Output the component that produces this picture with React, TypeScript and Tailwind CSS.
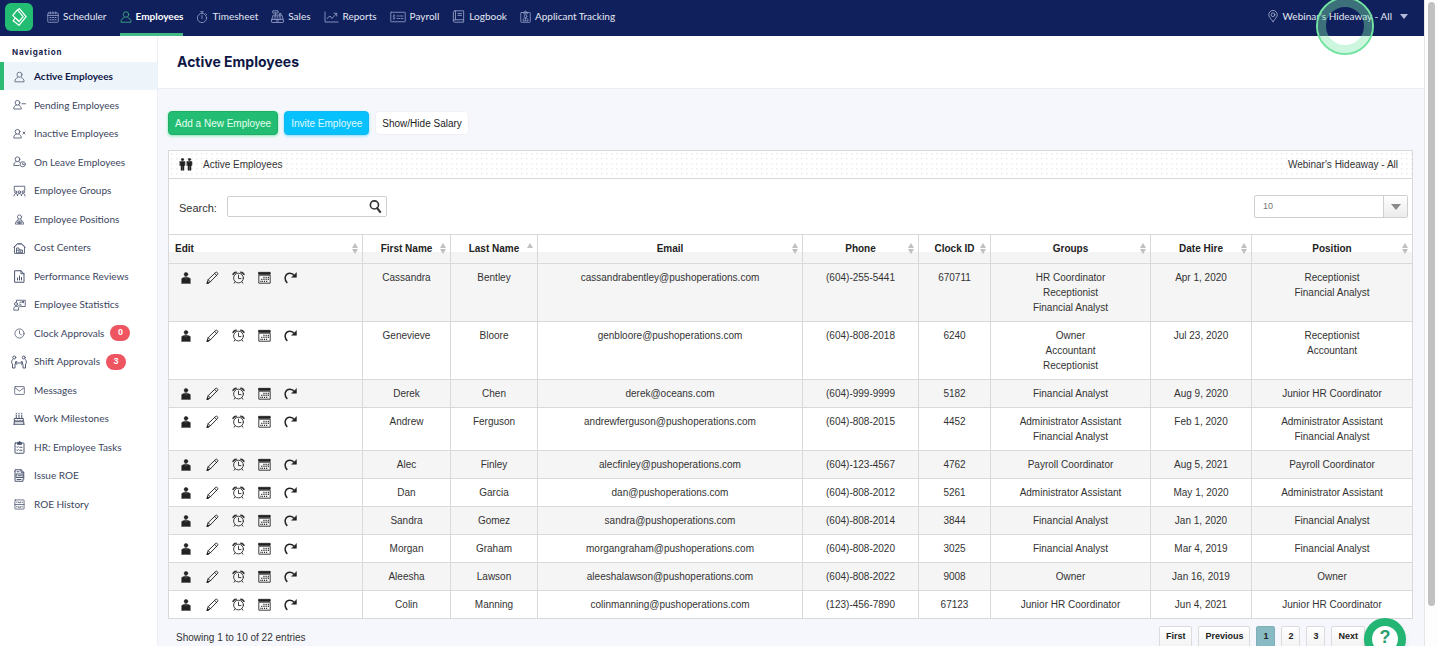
import type { ReactNode } from "react";
import clsx from "clsx";

type IconProps = { className?: string };

function Icon({
  className = "size-3",
  box = "0 0 24 24",
  width = 1.7,
  children,
}: {
  className?: string;
  box?: string;
  width?: number;
  children: ReactNode;
}) {
  return (
    <svg
      className={clsx("shrink-0", className)}
      viewBox={box}
      fill="none"
      stroke="currentColor"
      strokeWidth={width}
      strokeLinecap="round"
      strokeLinejoin="round"
      aria-hidden="true"
    >
      {children}
    </svg>
  );
}

/* ---------- top bar icons ---------- */

const CalendarIcon = () => (
  <Icon>
    <rect x="1.5" y="4" width="21" height="18.5" rx="1.5" />
    <path d="M1.5 9h21M6.5 1.5V6M12 1.5V6M17.5 1.5V6" />
    <path d="M6 13h2M11 13h2M16 13h2M6 17.5h2M11 17.5h2M16 17.5h2" strokeWidth="2.4" />
  </Icon>
);

const PersonIcon = ({ className }: IconProps) => (
  <Icon className={className}>
    <circle cx="12" cy="7" r="5.5" />
    <path d="M8 13.5C4 14.5 2 17 2 22.5h20c0-5.5-2-8-6-9" />
  </Icon>
);

const StopwatchIcon = () => (
  <Icon>
    <circle cx="12" cy="14" r="9.2" />
    <path d="M9.5 1.5h5M12 1.5v3M12 9v6M19.5 5.5l2 2" />
  </Icon>
);

const RegisterIcon = () => (
  <Icon className="size-[13px]">
    <rect x="1" y="17.5" width="22" height="5.5" rx="1" />
    <path d="M1.5 17.5 4 9.5h16l2.5 8" />
    <rect x="4" y="1.5" width="9" height="4" />
    <path d="M8.5 5.5v4M15.5 9.500v-3h3v3" />
    <path d="M6.5 12.500h2M11 12.500h2M15.5 12.500h2M6 15h2M11 15h2M16 15h2M10 20.200h4" />
  </Icon>
);

const ChartIcon = () => (
  <Icon className="h-3 w-[15px]" box="0 0 30 24" width={1.8}>
    <path d="M2 2v20h26" />
    <path d="m6 15 6-5 4 5 9-10M20 4.5h5.500V10" />
  </Icon>
);

const ChequeIcon = () => (
  <Icon className="h-3 w-4" box="0 0 32 24" width={1.7}>
    <rect x="1.5" y="2.5" width="29" height="19" rx="1" />
    <path d="M9.5 9.5c-3-1-4 2-1.5 2.5s2 3.5-1.5 2.5M8 7.5V9M8 15v1.5" />
    <path d="M14 10h4M20 10h6M14 15h2M18 15h2M23 15h3" />
  </Icon>
);

const BookIcon = () => (
  <Icon className="size-[13px]">
    <path d="M5 1.5h16.500v16.5H5c-3 0-3 4.5 0 4.5h16.500V18" />
    <path d="M2.500 20V4c0-1.500 1-2.500 2.500-2.500M6.500 1.500V18M11 6.500h6.500M11 10h6.500" />
  </Icon>
);

const ApplicantIcon = () => (
  <Icon className="h-[13px] w-[11px]" box="0 0 22 26">
    <rect x="1.500" y="5" width="19" height="19.500" rx="1" />
    <path d="M7.500 7V4h2c.5-3 2.500-3 3 0h2v3z" />
    <circle cx="11" cy="12.500" r="2.700" />
    <path d="M6 21c0-4 2-5 5-5s5 1 5 5zM11 16.500V20" />
  </Icon>
);

const PinIcon = () => (
  <Icon className="h-3.5 w-3" width={1.5}>
    <path d="M12 23C6 16 3.500 13 3.500 9.500a8.500 8.500 0 0 1 17 0C20.500 13 18 16 12 23z" />
    <circle cx="12" cy="9.500" r="3.700" />
  </Icon>
);

/* ---------- sidebar icons ---------- */

const personPath = (
  <>
    <circle cx="9" cy="7.500" r="4.700" />
    <path d="M6.500 12.500c-3.500 1-5 3-5 7.500h15c0-4.500-1.500-6.500-5-7.500" />
  </>
);

const PersonMinusIcon = () => (
  <Icon className="h-3 w-[13px]" box="0 0 26 24">
    {personPath}
    <path d="M18 9.500h7" />
  </Icon>
);

const PersonXIcon = () => (
  <Icon className="h-3 w-[13px]" box="0 0 26 24">
    {personPath}
    <path d="m20 8 4 4M24 8l-4 4" />
  </Icon>
);

const PersonClockIcon = () => (
  <Icon className="h-3 w-[13px]" box="0 0 26 24">
    <circle cx="9" cy="6.500" r="4.700" />
    <path d="M6.500 11.500c-3.500 1-5 3-5 7.500H12M11.500 11.500l2 1" />
    <circle cx="19.500" cy="16.500" r="5.200" />
    <path d="M19.500 14v3h2" />
  </Icon>
);

const GroupIcon = () => (
  <Icon className="h-3 w-[13px]" box="0 0 26 24">
    <path d="M2.500 11V2.500h21V11" />
    <circle cx="5.500" cy="14" r="2.300" />
    <circle cx="13" cy="14" r="2.300" />
    <circle cx="20.500" cy="14" r="2.300" />
    <path d="M2 22c0-7 7-7 7 0 0-7 8-7 8 0 0-7 7-7 7 0" />
  </Icon>
);

const PositionIcon = () => (
  <Icon className="size-[11px]">
    <circle cx="12" cy="6.500" r="4.500" />
    <path d="M9 11v3c-4 1-6 3-6 8h18c0-5-2-7-6-8v-3M8 14.500l4 7 4-7M12 15v6M6 18h3v3M18 18h-3v3" />
  </Icon>
);

const WarehouseIcon = () => (
  <Icon className="h-3 w-[13px]" box="0 0 26 24">
    <path d="M3 22V9.500L9 4h8l6 5.500V22zM1.500 10.500 9 3.500h8l7.500 7" />
    <path d="M7 21v-9h5v4h7v5zM7 16.500h5v4.500M15.500 16v5" />
  </Icon>
);

const ReviewIcon = () => (
  <Icon className="h-[13px] w-[11px]" box="0 0 22 26" width={2}>
    <path d="M2 1.500h12l6 6v17H2zM14 1.500v6h6" />
    <path d="M7 20v-4M11 20v-8M15 20v-5" />
  </Icon>
);

const StatsIcon = () => (
  <Icon className="h-3 w-[13px]" box="0 0 26 24">
    <path d="M7 6V2.500h17.500V15H16" />
    <circle cx="6" cy="10" r="3" />
    <path d="M1.500 21.500C1.500 16 3 14.500 6 14.500h4l5-4 1.500 2-5.500 5V21.500zM13 8l3-2.500 2 2L21 5M18.500 5H21v2.500" />
  </Icon>
);

const ClockIcon = () => (
  <Icon className="size-[11px]">
    <circle cx="12" cy="12" r="10" />
    <path d="M12 6v6.500l4 2.500" />
  </Icon>
);

const SwapPeopleIcon = () => (
  <Icon className="h-3.5 w-4" box="0 0 32 28" width={1.9}>
    <circle cx="6.500" cy="5" r="3" />
    <circle cx="25.500" cy="5" r="3" />
    <path d="M3 9C0 12 1 17 3 18v8h5v-8c2-1 2-3 2-5M29 9c3 3 2 8 0 9v8h-5v-8c-2-1-2-3-2-5" />
    <path d="M9 16h14M11.500 13l-3 3 3 3M20.500 13l3 3-3 3" />
  </Icon>
);

const MailIcon = () => (
  <Icon className="size-[11px]">
    <rect x="1.500" y="3.500" width="21" height="17" rx="1.500" />
    <path d="m3 6.500 9 7 9-7" />
  </Icon>
);

const CakeIcon = () => (
  <Icon className="h-[13px] w-3" box="0 0 24 26" width={2}>
    <path d="M3.500 13h17v6.500h-17zM1.500 24.500h21M2.500 19.500v5M21.500 19.500v5M3.500 16.500c2 2 4 2 5.500 0 2 2 4 2 5.500 0 2 2 4 2 6 0" />
    <path d="M6.500 12.500V6M12 12.500V6M17.500 12.500V6M6.500 2.500v1M12 2.500v1M17.500 2.500v1" />
  </Icon>
);

const TasksIcon = () => (
  <Icon className="h-[13px] w-[11px]" box="0 0 22 26" width={2}>
    <rect x="2" y="4" width="18" height="20.500" rx="1" />
    <path d="M7 6V3h2c0-2.500 4-2.500 4 0h2v3z" fill="currentColor" />
    <path d="m5.500 12 1 1 2-2M11.500 12.500H16M5.500 18l1 1 2-2M11.500 18.500H16" />
  </Icon>
);

const RoeIcon = () => (
  <Icon className="h-[13px] w-[11px]" box="0 0 22 26" width={2}>
    <path d="M2 5V1.500h12l5.500 5V20M2 5v19.500h16V20M14 1.500v5h5.500M6 5.500h4" />
    <rect x="5" y="10" width="13" height="7" />
    <path d="M8 13.500h7M6 21h8" />
  </Icon>
);

const DrawerIcon = () => (
  <Icon className="size-[11px]">
    <rect x="2" y="2" width="20" height="20" rx="1" />
    <path d="M2 12h20M9 6v2h6V6M9 16v2h6v-2M5 7h1M18 7h1M5 17h1M18 17h1" />
  </Icon>
);

/* ---------- table icons ---------- */

const BadgeIcon = () => (
  <Icon className="h-3 w-[10px]" box="0 0 20 24" width={1}>
    <circle cx="10" cy="4.500" r="3.700" fill="currentColor" />
    <path d="M1.500 23V13l5.500-2.500 3 7 3-7 5.500 2.500v10z" fill="currentColor" />
    <path d="M8.500 9.500h3L11 12l1 4-2 4-2-4 1-4z" fill="currentColor" />
  </Icon>
);

const PencilIcon = () => (
  <Icon className="size-[13px]" width={1.7}>
    <path d="M2 22.500 4 16 18 2.500c2-1.500 5 2 3.500 3.500L8 20zM4 16l4 4M16 4.500l4 4" />
    <path d="m2 22.500 1-3 2 2z" fill="currentColor" />
  </Icon>
);

const AlarmIcon = () => (
  <Icon className="size-[13px]" width={1.6}>
    <circle cx="12" cy="13" r="9" />
    <path d="M12 7.500V14h4.500M5.500 20 4 22.500M18.500 20l1.500 2.500" />
    <path d="M1.500 6.500C2 3 4.500 1.500 8 2zM22.500 6.500C22 3 19.500 1.500 16 2z" fill="currentColor" />
  </Icon>
);

const MonthIcon = () => (
  <Icon className="size-[13px]" width={1.6}>
    <path d="M1.500 2.500h21V6h-21z" fill="currentColor" />
    <path d="M1.500 8.500v14h21v-14z" />
    <path d="M10 12h2M14 12h2M18 12h2M6 15.500h2M10 15.500h2M14 15.500h2M18 15.500h2M4.500 19h1.500M7 19h2M11 19h2M15 19h2" strokeWidth="2.4" strokeLinecap="butt" />
  </Icon>
);

const RedoIcon = () => (
  <Icon className="size-[13px]" width={2.8}>
    <path d="M6 22C-1 15 2 4 11 4c4 0 6.500 2 8.500 4.500" strokeLinecap="butt" />
    <path d="M23 3.500V11.500h-8.500z" fill="currentColor" strokeWidth="1" />
  </Icon>
);

const CouplesIcon = () => (
  <Icon className="h-[13px] w-3.5" box="0 0 28 26" width={1}>
    <g fill="currentColor">
      <circle cx="7" cy="3" r="2.400" />
      <path d="M2 7h10v8h-1.500V9H10v15.500H7.500V16h-1v8.500H4V9h-.5v6H2z" />
      <circle cx="21" cy="3" r="2.400" />
      <path d="M16 7h10v8h-1.500V9H24v15.500h-2.500V16h-1v8.500H18V9h-.5v6H16z" />
    </g>
  </Icon>
);

const SortIcon = ({ up }: { up?: boolean }) => (
  <svg className="absolute top-2 right-1 h-3 w-[6px] text-[#c0c0c0]" viewBox="0 0 6 12" fill="currentColor" aria-hidden="true">
    {up ? (
      <path d="M0 5 3 0l3 5z" />
    ) : (
      <>
        <path d="M0 5 3 0l3 5z" />
        <path d="M0 6h6l-3 5z" />
      </>
    )}
  </svg>
);

const topNav = [
  { label: "Scheduler", icon: <CalendarIcon /> },
  { label: "Employees", icon: <PersonIcon className="size-3 text-[#3fae7f]" />, active: true },
  { label: "Timesheet", icon: <StopwatchIcon /> },
  { label: "Sales", icon: <RegisterIcon /> },
  { label: "Reports", icon: <ChartIcon /> },
  { label: "Payroll", icon: <ChequeIcon /> },
  { label: "Logbook", icon: <BookIcon /> },
  { label: "Applicant Tracking", icon: <ApplicantIcon /> },
];

const sideNav = [
  { label: "Active Employees", icon: <PersonIcon className="h-3 w-[11px]" />, active: true },
  { label: "Pending Employees", icon: <PersonMinusIcon /> },
  { label: "Inactive Employees", icon: <PersonXIcon /> },
  { label: "On Leave Employees", icon: <PersonClockIcon /> },
  { label: "Employee Groups", icon: <GroupIcon /> },
  { label: "Employee Positions", icon: <PositionIcon /> },
  { label: "Cost Centers", icon: <WarehouseIcon /> },
  { label: "Performance Reviews", icon: <ReviewIcon /> },
  { label: "Employee Statistics", icon: <StatsIcon /> },
  { label: "Clock Approvals", icon: <ClockIcon />, count: 0 },
  { label: "Shift Approvals", icon: <SwapPeopleIcon />, count: 3 },
  { label: "Messages", icon: <MailIcon /> },
  { label: "Work Milestones", icon: <CakeIcon /> },
  { label: "HR: Employee Tasks", icon: <TasksIcon /> },
  { label: "Issue ROE", icon: <RoeIcon /> },
  { label: "ROE History", icon: <DrawerIcon /> },
];

const columns = [
  { label: "Edit", width: "w-[194px]" },
  { label: "First Name", width: "w-[88px]" },
  { label: "Last Name", width: "w-[87px]" },
  { label: "Email", width: "w-[265px]" },
  { label: "Phone", width: "w-[116px]" },
  { label: "Clock ID", width: "w-[72px]" },
  { label: "Groups", width: "w-[160px]" },
  { label: "Date Hire", width: "w-[101px]" },
  { label: "Position", width: "w-[161px]" },
];

const employees = [
  { first: "Cassandra", last: "Bentley", email: "cassandrabentley@pushoperations.com", phone: "(604)-255-5441", clock: "670711", groups: ["HR Coordinator", "Receptionist", "Financial Analyst"], hired: "Apr 1, 2020", positions: ["Receptionist", "Financial Analyst"] },
  { first: "Genevieve", last: "Bloore", email: "genbloore@pushoperations.com", phone: "(604)-808-2018", clock: "6240", groups: ["Owner", "Accountant", "Receptionist"], hired: "Jul 23, 2020", positions: ["Receptionist", "Accountant"] },
  { first: "Derek", last: "Chen", email: "derek@oceans.com", phone: "(604)-999-9999", clock: "5182", groups: ["Financial Analyst"], hired: "Aug 9, 2020", positions: ["Junior HR Coordinator"] },
  { first: "Andrew", last: "Ferguson", email: "andrewferguson@pushoperations.com", phone: "(604)-808-2015", clock: "4452", groups: ["Administrator Assistant", "Financial Analyst"], hired: "Feb 1, 2020", positions: ["Administrator Assistant", "Financial Analyst"] },
  { first: "Alec", last: "Finley", email: "alecfinley@pushoperations.com", phone: "(604)-123-4567", clock: "4762", groups: ["Payroll Coordinator"], hired: "Aug 5, 2021", positions: ["Payroll Coordinator"] },
  { first: "Dan", last: "Garcia", email: "dan@pushoperations.com", phone: "(604)-808-2012", clock: "5261", groups: ["Administrator Assistant"], hired: "May 1, 2020", positions: ["Administrator Assistant"] },
  { first: "Sandra", last: "Gomez", email: "sandra@pushoperations.com", phone: "(604)-808-2014", clock: "3844", groups: ["Financial Analyst"], hired: "Jan 1, 2020", positions: ["Financial Analyst"] },
  { first: "Morgan", last: "Graham", email: "morgangraham@pushoperations.com", phone: "(604)-808-2020", clock: "3025", groups: ["Financial Analyst"], hired: "Mar 4, 2019", positions: ["Financial Analyst"] },
  { first: "Aleesha", last: "Lawson", email: "aleeshalawson@pushoperations.com", phone: "(604)-808-2022", clock: "9008", groups: ["Owner"], hired: "Jan 16, 2019", positions: ["Owner"] },
  { first: "Colin", last: "Manning", email: "colinmanning@pushoperations.com", phone: "(123)-456-7890", clock: "67123", groups: ["Junior HR Coordinator"], hired: "Jun 4, 2021", positions: ["Junior HR Coordinator"] },
];

const rowActions = [
  { label: "Profile", icon: <BadgeIcon /> },
  { label: "Edit", icon: <PencilIcon /> },
  { label: "Punches", icon: <AlarmIcon /> },
  { label: "Schedule", icon: <MonthIcon /> },
  { label: "Deactivate", icon: <RedoIcon /> },
];

function TopBar() {
  return (
    <header className="flex h-9 shrink-0 items-start bg-[#10205c] pr-4 pl-[5px] font-['Lato',sans-serif] text-[10px] text-[#e4e8f3]">
      <a href="#home" aria-label="Home" className="mt-[3px] mr-3.5 flex size-7 items-center justify-center rounded-md bg-[#22bd73]">
        <svg className="size-5 text-white" viewBox="0 0 24 24" fill="none" stroke="currentColor" strokeWidth="1.500" strokeLinejoin="round" aria-hidden="true">
          <path d="M10 3.500 12.500 2l8 9.500-8.500 10.500-7-5.500 2.500-3.500L4.500 10z" />
          <path d="m10 3.500 7 8-5 6-4.500-4.500M7.500 13l5 4.500" />
        </svg>
      </a>
      <nav className="flex gap-[13px]">
        {topNav.map((item) => (
          <a
            key={item.label}
            href="#nav"
            className={clsx(
              "flex h-9 items-center gap-1 border-b-3 whitespace-nowrap",
              item.active ? "border-[#43b983] font-bold text-white" : "border-transparent"
            )}
          >
            <span className={item.active ? "" : "text-[#8f9bc4]"}>{item.icon}</span>
            {item.label}
          </a>
        ))}
      </nav>
      <button type="button" className="ml-auto flex h-8 items-center gap-1">
        <span className="text-[#b5bddb]"><PinIcon /></span>
        Webinar's Hideaway - All
        <svg className="ml-1 h-[5px] w-2 text-[#b5bddb]" viewBox="0 0 8 5" fill="currentColor" aria-hidden="true">
          <path d="M0 0h8L4 5z" />
        </svg>
      </button>
    </header>
  );
}

function Sidebar() {
  return (
    <aside className="w-[158px] shrink-0 border-r border-[#eceff5] bg-white font-['Lato',sans-serif] text-[10px] text-[#3b4560]">
      <h2 className="flex h-[26px] items-center pt-1.5 pl-3 font-['Inter',sans-serif] text-[8px] font-bold tracking-widest text-[#1b2450]">Navigation</h2>
      <ul>
        {sideNav.map((item) => (
          <li key={item.label} className="odd:h-7 even:h-[29px]">
            <a
              href="#side"
              className={clsx(
                "flex h-full items-center gap-1.5 border-l-4 pt-px pl-1.5 whitespace-nowrap",
                item.active ? "border-[#2dba74] bg-[#edf4fa] font-bold text-[#0e1745]" : "border-transparent"
              )}
            >
              <span className="flex w-[18px] justify-center text-[#4d5670]">{item.icon}</span>
              {item.label}
              {item.count !== undefined && (
                <span className="flex h-4 w-5 items-center justify-center rounded-full bg-[#ee5561] font-['Liberation_Sans',sans-serif] text-[9px] font-bold text-white">
                  {item.count}
                </span>
              )}
            </a>
          </li>
        ))}
      </ul>
    </aside>
  );
}

function EmployeeTable() {
  return (
    <table className="w-full table-fixed border-collapse text-center leading-[15px] text-[#333]">
      <thead>
        <tr className="h-[29px] bg-[linear-gradient(#fff_60%,#f4f4f4_60%)]">
          {columns.map((col) => (
            <th
              key={col.label}
              scope="col"
              className={clsx("relative border border-[#d9d9d9] px-1.5 pb-0.5 text-[#222]", col.width, col.label === "Edit" && "text-left")}
            >
              {col.label}
              <SortIcon up={col.label === "Last Name"} />
            </th>
          ))}
        </tr>
      </thead>
      <tbody>
        {employees.map((e) => (
          <tr key={e.email} className="bg-white align-top odd:bg-[#f5f5f5] [&>td]:border [&>td]:border-[#d9d9d9] [&>td]:py-1.5">
            <td className="px-2">
              <div className="flex h-[15px] items-center gap-2">
                {rowActions.map((action) => (
                  <button key={action.label} type="button" aria-label={`${action.label} ${e.first}`} className="flex h-4 w-[18px] items-center justify-center text-[#222]">
                    {action.icon}
                  </button>
                ))}
              </div>
            </td>
            <td>{e.first}</td>
            <td>{e.last}</td>
            <td>{e.email}</td>
            <td>{e.phone}</td>
            <td>{e.clock}</td>
            <td>{e.groups.map((g) => <div key={g}>{g}</div>)}</td>
            <td>{e.hired}</td>
            <td>{e.positions.map((p) => <div key={p}>{p}</div>)}</td>
          </tr>
        ))}
      </tbody>
    </table>
  );
}

function Pagination() {
  return (
    <nav aria-label="Pages" className="mr-12 flex gap-1.5 text-[9px] font-bold text-[#222]">
      {["First", "Previous", "1", "2", "3", "Next"].map((page) => (
        <button
          key={page}
          type="button"
          className={clsx(
            "h-[22px] rounded-xs border px-1.5",
            page === "1" ? "border-[#7fb0b8] bg-[#87bac2]" : "border-[#dcdcdc] bg-linear-to-b from-white to-[#f3f3f3]"
          )}
        >
          {page}
        </button>
      ))}
    </nav>
  );
}

export default function App() {
  return (
    <div className="relative flex h-screen overflow-hidden bg-white">
      <div className="flex min-w-0 flex-1 flex-col">
        <TopBar />
        <div className="flex min-h-0 flex-1">
          <Sidebar />
          <main className="min-w-0 flex-1 overflow-hidden bg-[#f6f7fc] font-['Liberation_Sans',sans-serif] text-[10px] text-[#333]">
            <div className="flex h-[53px] items-center border-b border-[#eceef3] bg-white px-[19px] pb-0.5">
              <h1 className="font-['Inter',sans-serif] text-[14px] font-bold text-[#0e1745]">Active Employees</h1>
            </div>

            <div className="pt-[22px] pr-[11px] pl-2.5">
              <div className="flex h-6 gap-1.5">
                <button type="button" className="rounded border border-[#1fae68] bg-[#22bd73] px-1.5 text-[#e6fff1] shadow-[0_1px_3px_#7fe8b3]">Add a New Employee</button>
                <button type="button" className="rounded border border-[#12b8ee] bg-[#06c1fb] px-1.5 text-[#e0f8ff] shadow-[0_1px_3px_#7fdcff]">Invite Employee</button>
                <button type="button" className="rounded border border-[#f1f1f4] bg-white px-1.5 text-[#222]">Show/Hide Salary</button>
              </div>

              <section className="mt-[15px] border border-b-0 border-[#d9d9d9] bg-white">
                <div className="flex h-7 items-center gap-2.5 border-b border-[#d9d9d9] bg-[radial-gradient(#f0f0f0_1px,transparent_1px)] bg-size-[5px_5px] pr-3.5 pl-2.5">
                  <span className="text-[#222]"><CouplesIcon /></span>
                  <h2>Active Employees</h2>
                  <span className="ml-auto">Webinar's Hideaway - All</span>
                </div>
                <div className="flex h-[55px] items-center justify-between pr-1 pl-2.5">
                  <div className="flex items-center gap-2.5">
                    <label htmlFor="search" className="pt-1 text-[11px]">Search:</label>
                    <div className="flex h-[21px] w-[160px] items-center rounded-xs border border-[#cfcfcf] pr-1">
                      <input id="search" type="text" className="h-full min-w-0 flex-1 px-1.5 outline-none" />
                      <Icon className="size-[13px] text-[#333]" width={3}>
                        <circle cx="10" cy="9" r="7.500" />
                        <path d="m15 15 5.500 7" strokeWidth="4" />
                      </Icon>
                    </div>
                  </div>
                  <div className="flex h-[23px] w-[154px] items-center rounded-xs border border-[#cfcfcf]">
                    <select aria-label="Entries per page" className="h-full flex-1 appearance-none px-2 text-[9px] text-[#777] outline-none">
                      <option>10</option>
                      <option>25</option>
                      <option>50</option>
                    </select>
                    <span className="flex h-full w-6 items-center justify-center border-l border-[#cfcfcf] bg-linear-to-b from-white to-[#ebebeb]">
                      <svg className="h-1.5 w-2.5 text-[#8a8a8a]" viewBox="0 0 10 6" fill="currentColor" aria-hidden="true">
                        <path d="M0 0h10L5 6z" />
                      </svg>
                    </span>
                  </div>
                </div>
              </section>
              <EmployeeTable />

              <div className="flex items-start justify-between pt-[7px]">
                <p className="pt-1 pl-2">Showing 1 to 10 of 22 entries</p>
                <Pagination />
              </div>
            </div>
          </main>
        </div>
      </div>

      <div className="w-3.5 shrink-0 border-l border-[#e6e6e6] bg-[#fdfdfd] px-[3px] pt-0.5">
        <div className="h-[604px] rounded-full bg-[#c1c1c1]" />
      </div>

      {/* click highlight over the location menu */}
      <svg className="absolute -top-1 right-[63px] size-[60px]" viewBox="0 0 60 60" fill="none" aria-hidden="true">
        <circle cx="30" cy="30" r="23" stroke="#7fecac" strokeOpacity="0.400" strokeWidth="8" />
        <circle cx="30" cy="30" r="28" stroke="#74e3a1" strokeWidth="2" />
      </svg>

      <button
        type="button"
        aria-label="Help"
        className="absolute right-8 -bottom-3.5 flex size-[42px] items-center justify-center rounded-full bg-[#22b573] shadow-md"
      >
        <span className="flex size-[26px] items-center justify-center rounded-full bg-white pb-1 font-['Liberation_Sans',sans-serif] text-lg leading-none font-bold text-[#2a9d6c]">?</span>
      </button>
    </div>
  );
}
